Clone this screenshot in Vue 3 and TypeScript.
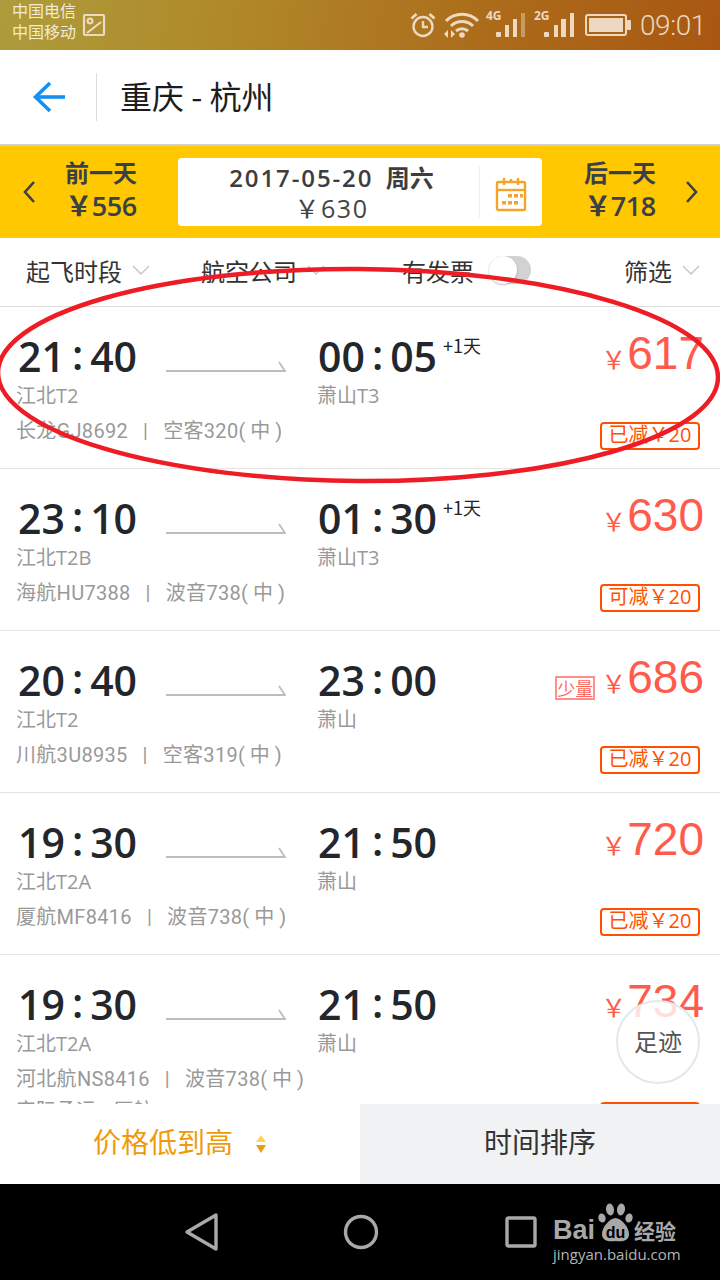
<script setup lang="ts">
interface Flight {
  dep: string
  depPort: string
  arr: string
  arrPort: string
  nextDay?: boolean
  airline: string
  plane: string
  price: number
  few?: boolean
  promo: string
  shared?: string
}

const flights: Flight[] = [
  { dep: '21:40', depPort: '江北T2', arr: '00:05', arrPort: '萧山T3', nextDay: true, airline: '长龙GJ8692', plane: '空客320', price: 617, promo: '已减￥20' },
  { dep: '23:10', depPort: '江北T2B', arr: '01:30', arrPort: '萧山T3', nextDay: true, airline: '海航HU7388', plane: '波音738', price: 630, promo: '可减￥20' },
  { dep: '20:40', depPort: '江北T2', arr: '23:00', arrPort: '萧山', airline: '川航3U8935', plane: '空客319', price: 686, few: true, promo: '已减￥20' },
  { dep: '19:30', depPort: '江北T2A', arr: '21:50', arrPort: '萧山', airline: '厦航MF8416', plane: '波音738', price: 720, promo: '已减￥20' },
  { dep: '19:30', depPort: '江北T2A', arr: '21:50', arrPort: '萧山', airline: '河北航NS8416', plane: '波音738', price: 734, promo: '已减￥20', shared: '实际承运 厦航' },
]

// spaced colon like the app renders it
function clock(t: string) {
  return t.split(':')
}
</script>

<template>
  <div class="screen">
    <div class="status">
      <div class="carriers">
        <span>中国电信</span>
        <span>中国移动</span>
      </div>
      <svg class="pic" width="24" height="24" viewBox="0 0 24 24" fill="none" stroke="#ecd9c0" stroke-width="2.2">
        <rect x="2" y="2" width="20" height="20" rx="1" />
        <circle cx="8" cy="8" r="2.4" />
        <path d="M5 20 L19 9" />
      </svg>
      <div class="status-right">
        <svg class="alarm" width="26" height="26" viewBox="0 0 26 26" fill="none" stroke="#ecd9c0" stroke-width="2.4">
          <circle cx="13" cy="14.5" r="9.5" />
          <path d="M13 9 V15 H18" />
          <path d="M1.5 6.5 L6.5 2 M24.5 6.5 L19.5 2" stroke-width="2.8" />
        </svg>
        <svg class="wifi" width="38" height="26" viewBox="0 0 38 26" fill="none" stroke="#ecd9c0" stroke-width="3">
          <path d="M3 9 C12 0 26 0 35 9" />
          <path d="M8 14 C14 8 24 8 30 14" />
          <path d="M13 19 C16.5 16 21.5 16 25 19" />
          <circle cx="19" cy="23" r="2.8" fill="#ecd9c0" stroke="none" />
          <path d="M1 22 L5 18 V26 Z M8 18 V26 L12 22 Z" fill="#ecd9c0" stroke="none" />
        </svg>
        <div class="signal s4g">
          <span class="net">4G</span>
          <svg width="40" height="30" viewBox="0 0 40 30" fill="#ecd9c0">
            <rect x="10" y="23" width="5" height="5" rx="1" />
            <rect x="19" y="16" width="4" height="12" />
            <rect x="27" y="10" width="4" height="18" />
            <rect x="35" y="4" width="4" height="24" opacity="0.45" />
          </svg>
        </div>
        <div class="signal s2g">
          <span class="net">2G</span>
          <svg width="40" height="30" viewBox="0 0 40 30" fill="#ecd9c0">
            <rect x="10" y="23" width="5" height="5" rx="1" />
            <rect x="20" y="16" width="4" height="12" />
            <rect x="27" y="10" width="5" height="18" />
            <rect x="36" y="4" width="4" height="24" />
          </svg>
        </div>
        <svg class="battery" width="46" height="22" viewBox="0 0 46 22">
          <rect x="1" y="1" width="40" height="20" rx="2" fill="none" stroke="#ecd9c0" stroke-width="2" />
          <rect x="4" y="4" width="34" height="14" fill="#ecd9c0" />
          <rect x="42" y="6" width="4" height="10" rx="1" fill="#ecd9c0" />
        </svg>
        <span class="clock">09:01</span>
      </div>
    </div>

    <header class="head">
      <svg class="back" width="34" height="34" viewBox="0 0 34 34" fill="none" stroke="#1590ee" stroke-width="3.6">
        <path d="M18 3 L3.5 17 L18 31" />
        <path d="M4 17 H33" />
      </svg>
      <div class="head-sep"></div>
      <h1 class="route">重庆 - 杭州</h1>
    </header>

    <section class="datebar">
      <svg class="chev" width="14" height="24" viewBox="0 0 14 24" fill="none" stroke="#3a3f4a" stroke-width="2.6">
        <path d="M12 2 L3 12 L12 22" />
      </svg>
      <div class="side-day">
        <div class="side-label">前一天</div>
        <div class="side-price">￥556</div>
      </div>
      <div class="date-card">
        <div class="date-text">
          <div class="date-main"><span class="date-num">2017-05-20</span>&nbsp;&nbsp;周六</div>
          <div class="date-price">￥630</div>
        </div>
        <div class="date-icon">
          <svg width="32" height="36" viewBox="0 0 32 36" fill="none" stroke="#f5a32b" stroke-width="2.4">
            <rect x="2" y="5" width="28" height="28" rx="1.5" />
            <path d="M2 13 H30" />
            <path d="M9 1 V8 M16 2 V6 M23 1 V8" />
            <g fill="#f5a32b" stroke="none">
              <rect x="13" y="17" width="4" height="3.5" />
              <rect x="19" y="17" width="4" height="3.5" />
              <rect x="25" y="17" width="3" height="3.5" />
              <rect x="7" y="24" width="4" height="3.5" />
              <rect x="13" y="24" width="4" height="3.5" />
              <rect x="19" y="24" width="4" height="3.5" />
            </g>
          </svg>
        </div>
      </div>
      <div class="side-day next">
        <div class="side-label">后一天</div>
        <div class="side-price">￥718</div>
      </div>
      <svg class="chev" width="14" height="24" viewBox="0 0 14 24" fill="none" stroke="#3a3f4a" stroke-width="2.6">
        <path d="M2 2 L11 12 L2 22" />
      </svg>
    </section>

    <nav class="filters">
      <div class="filter">
        <span>起飞时段</span>
        <svg class="caret" width="18" height="10" viewBox="0 0 18 10" fill="none" stroke="#c4c4c4" stroke-width="1.4"><path d="M1 1 L9 9 L17 1" /></svg>
      </div>
      <div class="filter">
        <span>航空公司</span>
        <svg class="caret" width="18" height="10" viewBox="0 0 18 10" fill="none" stroke="#c4c4c4" stroke-width="1.4"><path d="M1 1 L9 9 L17 1" /></svg>
      </div>
      <div class="filter">
        <span>有发票</span>
        <span class="switch"><span class="knob"></span></span>
      </div>
      <div class="filter">
        <span>筛选</span>
        <svg class="caret" width="18" height="10" viewBox="0 0 18 10" fill="none" stroke="#c4c4c4" stroke-width="1.4"><path d="M1 1 L9 9 L17 1" /></svg>
      </div>
    </nav>

    <main class="list">
      <article v-for="(f, i) in flights" :key="i" class="row" :class="{ extra: f.shared }">
        <div class="row-top">
          <div class="col-dep">
            <div class="time"><span>{{ clock(f.dep)[0] }}</span><b>:</b><span>{{ clock(f.dep)[1] }}</span></div>
            <div class="port">{{ f.depPort }}</div>
          </div>
          <svg class="arrow" width="120" height="16" viewBox="0 0 120 16" fill="none" stroke="#bdbdbd" stroke-width="1.8">
            <path d="M0 14 H119 L113 5" />
          </svg>
          <div class="col-arr">
            <div class="time">
              <span>{{ clock(f.arr)[0] }}</span><b>:</b><span>{{ clock(f.arr)[1] }}</span>
              <em v-if="f.nextDay" class="plus">+1天</em>
            </div>
            <div class="port">{{ f.arrPort }}</div>
          </div>
          <div class="price">
            <span v-if="f.few" class="few">少量</span>
            <span class="yen">￥</span><span class="amount">{{ f.price }}</span>
          </div>
        </div>
        <div class="row-meta">
          <span class="meta">{{ f.airline }}<i class="bar">|</i>{{ f.plane }}<span class="cabin">(中)</span></span>
          <span class="promo">{{ f.promo }}</span>
        </div>
        <div v-if="f.shared" class="shared">{{ f.shared }}</div>
      </article>

      <button class="trace">足迹</button>
    </main>

    <div class="sort">
      <div class="sort-tab active">
        价格低到高
        <svg width="12" height="20" viewBox="0 0 12 20">
          <path d="M6 1 L11 8 H1 Z" fill="#ffd257" />
          <path d="M6 19 L11 11 H1 Z" fill="#f09a0a" />
        </svg>
      </div>
      <div class="sort-tab">时间排序</div>
    </div>

    <footer class="navbar">
      <svg class="nav-back" width="36" height="40" viewBox="0 0 36 40" fill="none" stroke="#a9a9a9" stroke-width="3.4" stroke-linejoin="round">
        <path d="M32 3 V37 L3 20 Z" />
      </svg>
      <svg class="nav-home" width="36" height="36" viewBox="0 0 36 36" fill="none" stroke="#a9a9a9" stroke-width="3.4">
        <circle cx="18" cy="18" r="15.5" />
      </svg>
      <svg class="nav-recent" width="32" height="32" viewBox="0 0 32 32" fill="none" stroke="#a9a9a9" stroke-width="3.4">
        <rect x="2" y="2" width="28" height="28" rx="1.5" />
      </svg>
      <div class="watermark">
        <div class="wm-top">
          <span class="wm-bai">Bai</span>
          <svg class="wm-paw" width="37" height="40" viewBox="0 0 37 40" fill="#a8a8a8">
            <ellipse cx="5" cy="15" rx="3.6" ry="4.6" transform="rotate(-15 5 15)" />
            <ellipse cx="13" cy="6.5" rx="4" ry="6" transform="rotate(-8 13 6.5)" />
            <ellipse cx="24" cy="6.5" rx="4" ry="6" transform="rotate(8 24 6.5)" />
            <ellipse cx="32" cy="15" rx="3.6" ry="4.6" transform="rotate(15 32 15)" />
            <path d="M18.5 15 C13 15 5 24 5 31 C5 38 12 39 18.5 38 C25 39 32 38 32 31 C32 24 24 15 18.5 15 Z" />
            <text x="18.5" y="35" text-anchor="middle" font-size="16" font-weight="700" font-family="Liberation Sans, sans-serif" fill="#000">du</text>
          </svg>
          <span class="wm-jy">经验</span>
        </div>
        <div class="wm-url">jingyan.baidu.com</div>
      </div>
    </footer>

    <svg class="circled" width="720" height="230" viewBox="0 0 720 230" fill="none">
      <ellipse cx="358" cy="112" rx="360" ry="106" stroke="#ee1c25" stroke-width="4.5" transform="rotate(0.4 358 112)" />
    </svg>
  </div>
</template>

<style>
html, body { margin: 0; background: #fff; }
</style>

<style scoped>
.screen {
  position: relative; width: 720px; height: 1280px; overflow: hidden; background: #fff;
  display: flex; flex-direction: column;
  font-family: "Open Sans", "Noto Sans CJK SC", sans-serif; color: #222;
}
.status {
  height: 50px; flex: none; display: flex; align-items: center; padding: 0 14px 0 12px; box-sizing: border-box;
  background: linear-gradient(100deg, #ad9c3c 0%, #b08a2a 30%, #ac6a1a 70%, #a85712 100%);
  color: #f4ead6;
}
.carriers { display: flex; flex-direction: column; font-size: 16px; line-height: 21px; margin-top: -8px; font-family: "Noto Sans CJK SC", sans-serif; }
.pic { margin-left: 6px; margin-top: 0; }
.status-right { margin-left: auto; display: flex; align-items: center; }
.signal { position: relative; width: 40px; height: 30px; margin-top: -2px; }
.signal svg { display: block; }
.wifi { margin-left: 7px; }
.s4g { margin-left: 5px; }
.s2g { margin-left: 8px; }
.net { position: absolute; left: 0; top: 0; font-size: 12px; font-weight: 700; color: #ecd9c0; line-height: 14px; }
.battery { margin-left: 11px; }
.clock { font-size: 28px; font-weight: 300; font-family: "Roboto", sans-serif; color: #ecd9c0; margin-left: 9px; letter-spacing: -0.4px; }

.head {
  height: 96px; flex: none; display: flex; align-items: center; border-bottom: 2px solid #d0d0d0; box-sizing: border-box;
}
.back { margin-left: 32px; margin-top: -1px; }
.head-sep { width: 1px; height: 48px; background: #ddd; margin-left: 30px; }
.route { margin: -4px 0 0 23px; font-size: 32px; font-weight: 400; color: #1c1c1c; font-family: "Noto Sans CJK SC", sans-serif; }

.datebar {
  height: 92px; flex: none; background: #ffc800; display: flex; align-items: center; padding: 0 0 0 22px;
  box-sizing: border-box; color: #3a3f4a;
}
.side-day { width: 130px; text-align: center; flex: none; margin-top: -4px; }
.side-day.next { margin-left: 13px; }
.side-label { font-size: 24px; font-weight: 700; line-height: 32px; font-family: "Noto Sans CJK SC", sans-serif; }
.side-price { font-size: 27px; font-weight: 600; line-height: 36px; letter-spacing: -0.5px; }
.date-card {
  width: 364px; height: 68px; flex: none; margin-left: 12px; background: #fff; border-radius: 4px; display: flex; align-items: center;
}
.date-text { flex: 1; text-align: center; padding-left: 6px; margin-top: -1px; }
.date-main { font-size: 24px; font-weight: 600; line-height: 32px; color: #3d3d3d; }
.date-num { letter-spacing: 1.9px; }
.date-price { font-size: 25px; line-height: 28px; letter-spacing: 1.5px; color: #444; }
.date-icon { width: 62px; height: 52px; border-left: 1px solid #eee; display: flex; align-items: center; justify-content: center; }
.date-icon svg { margin-top: 5px; }

.filters {
  height: 69px; flex: none; display: grid; grid-template-columns: 175px 201px 222px auto; align-items: center;
  padding: 0 0 4px 26px; border-bottom: 1px solid #ddd; box-sizing: border-box;
  font-size: 24px; color: #333; font-family: "Noto Sans CJK SC", sans-serif;
}
.filter { display: flex; align-items: center; }
.caret { margin-left: 10px; flex: none; }
.switch { width: 42px; height: 28px; margin-left: 15px; border-radius: 14px; background: #d2d2d2; position: relative; display: block; }
.knob { position: absolute; left: 0; top: 0; width: 28px; height: 28px; border-radius: 50%; background: #fff; box-shadow: 0 1px 2px rgba(0,0,0,0.25); }

.list { flex: 1; min-height: 0; overflow: hidden; position: relative; }
.row { height: 162px; border-bottom: 1px solid #e4e4e4; box-sizing: border-box; padding: 24px 20px 0 16px; }
.row-top { display: flex; height: 91px; align-items: flex-start; }
.col-dep { width: 150px; flex: none; }
.col-arr { width: 200px; flex: none; margin-left: 31px; }
.arrow { flex: none; margin-top: 26px; }
.time {
  font-size: 41px; line-height: 50px; height: 50px; font-weight: 600; color: #23272c; display: flex; align-items: flex-start;
  font-family: "Open Sans", sans-serif; position: relative; white-space: nowrap; margin-left: 1px;
}
.col-dep .time { margin-left: 2px; }
.time b { font-weight: 600; margin: -2px 7px 0; }
.plus { position: absolute; left: 125px; top: 3px; font-style: normal; font-size: 18px; line-height: 22px; font-weight: 400; color: #222; font-family: "Noto Sans CJK SC", sans-serif; }
.port { font-size: 20px; line-height: 28px; color: #999; margin-top: 1px; }
.price { margin-left: auto; margin-right: -4px; display: flex; align-items: baseline; color: #ff5b4c; margin-top: -4px; }
.yen { font-size: 25px; margin-right: 1px; }
.amount { font-size: 46px; line-height: 52px; font-family: "Liberation Sans", sans-serif; }
.few {
  box-sizing: border-box; font-size: 18px; line-height: 20px; height: 24px; width: 40px; border: 2px solid #ff8f88; color: #ff6a60;
  margin-right: 6px; align-self: flex-start; margin-top: 25px; text-align: center; white-space: nowrap; font-family: "Noto Sans CJK SC", sans-serif;
}
.row-meta { display: flex; justify-content: space-between; align-items: flex-start; height: 32px; }
.meta { font-size: 20px; line-height: 32px; color: #999; margin-top: -7px; white-space: pre; font-family: "Roboto", "Noto Sans CJK SC", sans-serif; letter-spacing: 0.3px; }
.bar { font-style: normal; margin: 0 15px; }
.cabin { letter-spacing: 5px; }
.promo {
  box-sizing: border-box; width: 100px; height: 28px; border: 2px solid #ff5000; border-radius: 4px; color: #ff5000;
  font-size: 20px; line-height: 22px; text-align: center; white-space: nowrap;
}
.row.extra { height: 190px; border-bottom: none; }
.row.extra .promo { margin-top: 32px; }
.shared { font-size: 20px; line-height: 28px; color: #999; margin-top: -5px; word-spacing: 12px; }
.trace {
  position: absolute; left: 616px; top: 693px; width: 84px; height: 84px; border-radius: 50%; box-sizing: border-box;
  border: 2px solid #e3e8ee; background: rgba(255,255,255,0.8); padding: 0 0 4px;
  font-size: 24px; color: #555; font-family: "Noto Sans CJK SC", sans-serif;
}

.sort { height: 80px; flex: none; display: flex; }
.sort-tab {
  width: 360px; display: flex; align-items: center; justify-content: center; gap: 22px; background: #f1f2f4; padding-bottom: 6px; box-sizing: border-box;
  font-size: 28px; color: #333; font-family: "Noto Sans CJK SC", sans-serif;
}
.sort-tab svg { margin-top: 6px; }
.sort-tab.active { background: #fff; color: #f09a0a; }

.navbar { height: 96px; flex: none; background: #000; position: relative; }
.nav-back, .nav-home, .nav-recent { position: absolute; }
.nav-back { left: 184px; top: 28px; }
.nav-home { left: 343px; top: 30px; }
.nav-recent { left: 505px; top: 32px; }
.watermark { position: absolute; left: 553px; top: 19px; color: #a8a8a8; }
.wm-top { display: flex; align-items: flex-end; height: 40px; }
.wm-bai { font-family: "Liberation Sans", sans-serif; font-weight: 700; font-size: 27px; line-height: 26px; width: 44px; }
.wm-paw { flex: none; }
.wm-jy { font-size: 21px; line-height: 26px; font-weight: 700; font-family: "Noto Sans CJK SC", sans-serif; }
.wm-url { font-size: 15px; line-height: 20px; font-family: "Open Sans", sans-serif; margin-top: 1px; color: #b4b4b4; white-space: nowrap; }

.circled { position: absolute; left: 0; top: 263px; pointer-events: none; }
</style>
